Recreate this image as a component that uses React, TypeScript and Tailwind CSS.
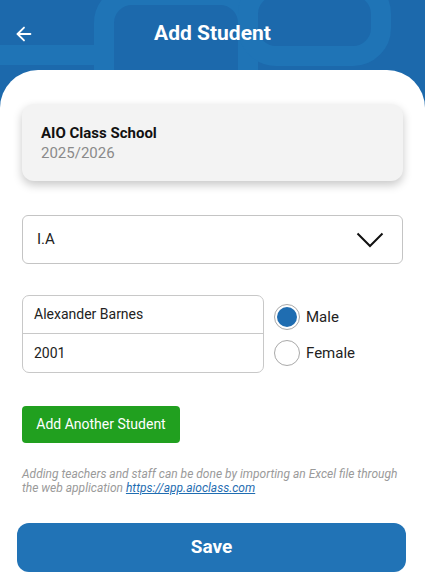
import { ArrowLeft } from "lucide-react";

function HeaderPattern() {
  return (
    <svg
      className="absolute left-0 top-0 h-[110px] w-[425px]"
      viewBox="0 0 425 110"
      fill="none"
    >
      <g stroke="#1f74b6" strokeWidth="20">
        <path d="M0 55 H104" />
        <rect x="104" y="-5" width="144" height="140" rx="28" />
        <rect x="248" y="-14" width="133" height="70" rx="28" />
      </g>
    </svg>
  );
}

function Radio({ label, checked }: { label: string; checked?: boolean }) {
  return (
    <label className="flex items-center gap-[6px]">
      <span className="flex h-[26px] w-[26px] items-center justify-center rounded-full border-[1.5px] border-[#a9a9a9] bg-white">
        {checked && <span className="h-[20px] w-[20px] rounded-full bg-[#1f6db1]" />}
      </span>
      <span className="text-[15px] text-[#222]">{label}</span>
    </label>
  );
}

export default function App() {
  return (
    <div
      className="relative h-[587px] w-[425px] overflow-hidden bg-[#1c69ac]"
      style={{ fontFamily: "Roboto, 'Liberation Sans', sans-serif" }}
    >
      <HeaderPattern />
      <header className="relative flex h-[70px] items-center justify-center pb-[2px]">
        <ArrowLeft className="absolute left-[13px] h-[22px] w-[22px] text-white" strokeWidth={2} />
        <h1 className="text-[21px] font-bold text-white">Add Student</h1>
      </header>

      <main className="relative h-[517px] rounded-t-[38px] bg-white px-[22px] pt-[34px]">
        <section className="rounded-[12px] bg-[#f3f3f3] px-[19px] pb-[18px] pt-[19px] shadow-[0_4px_10px_rgba(0,0,0,0.22)]">
          <div className="text-[15px] font-bold leading-[20px] text-[#111]">AIO Class School</div>
          <div className="text-[15px] leading-[20px] text-[#8a8a8a]">2025/2026</div>
        </section>

        <div className="mt-[34px] flex h-[49px] items-center justify-between rounded-[6px] border border-[#c4c4c4] pl-[14px] pr-[18px]">
          <span className="text-[15px] text-[#222]">I.A</span>
          <svg width="28" height="16" viewBox="0 0 28 16" fill="none">
            <path d="M1.5 1.5 L14 14 L26.5 1.5" stroke="#111" strokeWidth="2" />
          </svg>
        </div>

        <div className="mt-[31px] flex items-start gap-[10px]">
          <div className="w-[242px] overflow-hidden rounded-[7px] border border-[#c8c8c8]">
            <div className="flex h-[38px] items-center border-b border-[#c8c8c8] px-[11px] text-[14px] text-[#222]">
              Alexander Barnes
            </div>
            <div className="flex h-[38px] items-center px-[11px] text-[14px] text-[#222]">2001</div>
          </div>
          <div className="flex flex-col gap-[10px] pt-[9px]">
            <Radio label="Male" checked />
            <Radio label="Female" />
          </div>
        </div>

        <button className="mt-[33px] h-[37px] w-[158px] rounded-[4px] bg-[#21a01f] text-[14px] text-white">
          Add Another Student
        </button>

        <p className="mt-[24px] text-[12px] italic leading-[14px] text-[#9a9a9a]">
          Adding teachers and staff can be done by importing an Excel file through the web application{" "}
          <span className="text-[#1f6db1] underline">https://app.aioclass.com</span>
        </p>

        <button className="mx-[-5px] mt-[28px] flex h-[49px] w-[389px] items-center justify-center rounded-[12px] bg-[#2173b6] text-[19px] font-bold text-white">
          Save
        </button>
      </main>
    </div>
  );
}
